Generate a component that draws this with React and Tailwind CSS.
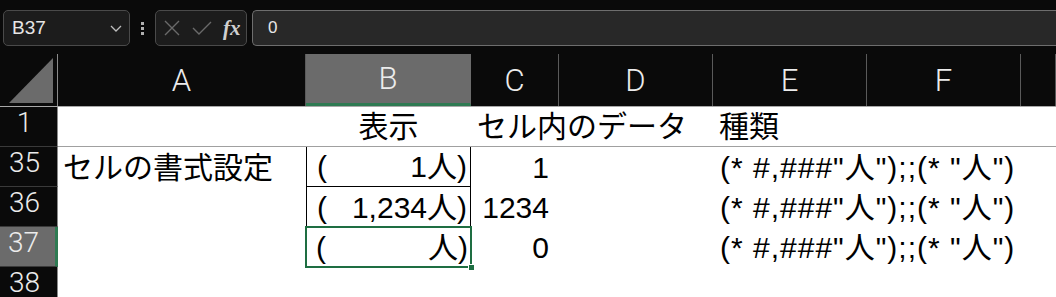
import React from 'react';

const cellFont = { fontFamily: '"Liberation Sans", "Noto Sans CJK JP", sans-serif' };

const COLS = ['A', 'B', 'C', 'D', 'E', 'F', 'G'];
const COL_W = ['w-[248px]', 'w-[165px]', 'w-[88px]', 'w-[154px]', 'w-[154px]', 'w-[154px]', 'flex-1'];

const FORMAT = '(* #,###"人");;(* "人")';

const FormulaBar = () => (
  <div className="h-[54px] bg-[#0a0a0a] flex items-start pt-[10px] pl-[3px] gap-0">
    <div className="w-[127px] h-[36px] rounded-[5px] border border-[#4a4a4a] bg-[#1c1c1c] flex items-center justify-between pl-[8px] pr-[6px]">
      <span className="text-[19px] text-[#e6e6e6]" style={{ fontFamily: '"Liberation Sans", sans-serif' }}>B37</span>
      <svg width="14" height="14" viewBox="0 0 14 14" fill="none" stroke="#bdbdbd" strokeWidth="1.3">
        <path d="M2 5l5 5 5-5" />
      </svg>
    </div>
    <div className="w-[25px] h-[36px] flex flex-col items-center justify-center gap-[2px]">
      <span className="w-[3px] h-[3px] bg-[#b0b0b0]" />
      <span className="w-[3px] h-[3px] bg-[#b0b0b0]" />
      <span className="w-[3px] h-[3px] bg-[#b0b0b0]" />
    </div>
    <div className="w-[92px] h-[36px] rounded-[5px] border border-[#4a4a4a] bg-[#1c1c1c] flex items-center pl-[8px]">
      <svg width="16" height="16" viewBox="0 0 16 16" fill="none" stroke="#6a6a6a" strokeWidth="1.4">
        <path d="M1 1l14 14M15 1L1 15" />
      </svg>
      <svg className="ml-[12px]" width="20" height="16" viewBox="0 0 20 16" fill="none" stroke="#6a6a6a" strokeWidth="1.4">
        <path d="M1 8l6 6L19 2" />
      </svg>
      <span className="ml-[11px] text-[21px] italic font-bold text-[#d0d0d0] leading-none" style={{ fontFamily: '"Liberation Serif", serif' }}>fx</span>
    </div>
    <div className="ml-[5px] flex-1 h-[36px] rounded-l-[5px] border-y border-l border-[#6e6e6e] bg-[#282828] flex items-center pl-[15px]">
      <span className="text-[17px] text-[#e6e6e6]" style={{ fontFamily: '"Liberation Sans", sans-serif' }}>0</span>
    </div>
  </div>
);

const ColumnHeaders = () => (
  <div className="flex h-[53px] bg-[#0a0a0a] border-b border-[#a8a8a8]">
    <div className="w-[58px] border-r border-[#8a8a8a] flex items-end justify-end pr-[4px] pb-[3px]">
      <svg width="44" height="45" viewBox="0 0 44 45">
        <polygon points="0,45 44,45 44,0" fill="#6b6b6b" />
      </svg>
    </div>
    {COLS.map((c, i) => (
      <div
        key={c}
        className={`${COL_W[i]} flex items-center justify-center border-r ${
          c === 'B' ? 'bg-[#6b6b6b] border-[#6b6b6b] border-b-[3px] border-b-[#2e7a52]' : 'border-[#5a5a5a]'
        }`}
      >
        <span className="text-[31px] font-light text-[#ececec] leading-none" style={{ fontFamily: 'Roboto, sans-serif' }}>
          {c === 'G' ? '' : c}
        </span>
      </div>
    ))}
  </div>
);

const RowHeader = ({ n, selected }) => (
  <div
    className={`w-[58px] shrink-0 flex items-start justify-center pr-[8px] pt-[1px] border-b border-[#3a3a3a] ${
      selected ? 'bg-[#6b6b6b] border-r-[3px] border-r-[#2e7a52]' : 'bg-[#0a0a0a] border-r border-r-[#8a8a8a]'
    }`}
  >
    <span className="text-[28px] font-light text-[#ececec] leading-[30px]" style={{ fontFamily: 'Roboto, sans-serif' }}>
      {n}
    </span>
  </div>
);

const Cell = ({ w, className = '', children }) => (
  <div className={`${w} shrink-0 flex items-end pb-[1px] text-[30px] leading-[36px] text-black ${className}`}>{children}</div>
);

const DisplayValue = ({ value }) => (
  <div className="flex-1 flex justify-between pl-[10px] pr-[3px]">
    <span>(</span>
    <span>{value}人)</span>
  </div>
);

export default function App() {
  return (
    <div className="w-[1056px] h-[297px] overflow-hidden bg-white">
      <FormulaBar />
      <ColumnHeaders />
      <div style={cellFont}>
        {/* row 1 */}
        <div className="flex h-[40px]">
          <RowHeader n="1" />
          <div className="flex flex-1 border-b border-[#a0a0a0] whitespace-nowrap">
            <Cell w="w-[248px]" />
            <Cell w="w-[165px]" className="justify-center">表示</Cell>
            <Cell w="w-[88px]" className="pl-[6px] overflow-visible">
              <span className="relative z-10">セル内のデータ</span>
            </Cell>
            <Cell w="w-[154px]" />
            <Cell w="w-[154px]" className="pl-[6px]">種類</Cell>
            <Cell w="w-[154px]" />
          </div>
        </div>
        {/* row 35 */}
        <div className="flex h-[40px]">
          <RowHeader n="35" />
          <div className="flex flex-1 whitespace-nowrap">
            <Cell w="w-[248px]" className="pl-[5px]">セルの書式設定</Cell>
            <Cell w="w-[165px]" className="border-x border-b border-black">
              <DisplayValue value="1" />
            </Cell>
            <Cell w="w-[88px]" className="justify-end pr-[10px]">1</Cell>
            <Cell w="w-[154px]" />
            <Cell w="w-[154px]" className="pl-[7px] tracking-[1px]">{FORMAT}</Cell>
          </div>
        </div>
        {/* row 36 */}
        <div className="flex h-[40px]">
          <RowHeader n="36" />
          <div className="flex flex-1 whitespace-nowrap">
            <Cell w="w-[248px]" />
            <Cell w="w-[165px]" className="border-x border-black">
              <DisplayValue value="1,234" />
            </Cell>
            <Cell w="w-[88px]" className="justify-end pr-[10px]">1234</Cell>
            <Cell w="w-[154px]" />
            <Cell w="w-[154px]" className="pl-[7px] tracking-[1px]">{FORMAT}</Cell>
          </div>
        </div>
        {/* row 37 */}
        <div className="flex h-[40px]">
          <RowHeader n="37" selected />
          <div className="flex flex-1 whitespace-nowrap">
            <Cell w="w-[248px]" />
            <Cell w="w-[165px]" className="relative">
              <DisplayValue value="" />
              <div className="absolute -inset-[1px] border-2 border-[#1e6e42] pointer-events-none" />
              <div className="absolute -right-[4px] -bottom-[4px] w-[7px] h-[7px] bg-[#1e6e42] border border-white" />
            </Cell>
            <Cell w="w-[88px]" className="justify-end pr-[10px]">0</Cell>
            <Cell w="w-[154px]" />
            <Cell w="w-[154px]" className="pl-[7px] tracking-[1px]">{FORMAT}</Cell>
          </div>
        </div>
        {/* row 38 */}
        <div className="flex h-[40px]">
          <RowHeader n="38" />
          <div className="flex-1" />
        </div>
      </div>
    </div>
  );
}
